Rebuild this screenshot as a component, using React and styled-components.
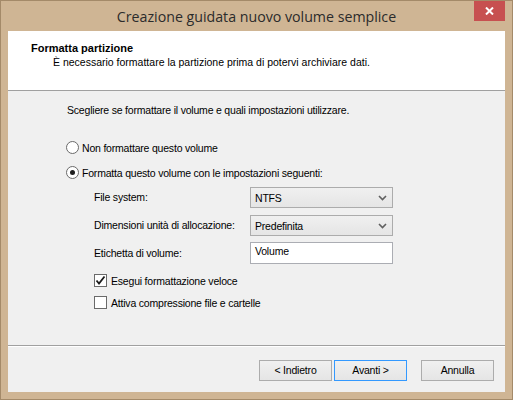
import React from "react";
import styled, { createGlobalStyle } from "styled-components";

const GlobalStyle = createGlobalStyle`
  html, body {
    margin: 0;
    padding: 0;
    background: #cfb594;
  }
  * {
    box-sizing: border-box;
  }
`;

export default function App() {
  return (
    <>
      <GlobalStyle />
      <WindowFrame>
        <TitleBar>
          <span />
          <TitleText>Creazione guidata nuovo volume semplice</TitleText>
          <CloseButton>
            <svg width="9" height="8" viewBox="0 0 9 8">
              <path d="M1 0.5 L8 7.5 M8 0.5 L1 7.5" stroke="#fff" strokeWidth="2" />
            </svg>
          </CloseButton>
        </TitleBar>

        <ClientArea>
          <WizardHeader>
            <HeaderTitle>Formatta partizione</HeaderTitle>
            <HeaderSubtitle>
              È necessario formattare la partizione prima di potervi archiviare dati.
            </HeaderSubtitle>
          </WizardHeader>

          <Body>
            <Intro>Scegliere se formattare il volume e quali impostazioni utilizzare.</Intro>

            <RadioRow $top={24}>
              <RadioCircle />
              <span>Non formattare questo volume</span>
            </RadioRow>
            <RadioRow $top={12}>
              <RadioCircle $checked />
              <span>Formatta questo volume con le impostazioni seguenti:</span>
            </RadioRow>

            <SettingsGrid>
              <FieldLabel>File system:</FieldLabel>
              <ComboBox>
                <span>NTFS</span>
                <Chevron />
              </ComboBox>

              <FieldLabel>Dimensioni unità di allocazione:</FieldLabel>
              <ComboBox>
                <span>Predefinita</span>
                <Chevron />
              </ComboBox>

              <FieldLabel>Etichetta di volume:</FieldLabel>
              <TextField>Volume</TextField>
            </SettingsGrid>

            <CheckRow $top={10}>
              <CheckBox>
                <svg width="11" height="11" viewBox="0 0 11 11">
                  <path d="M1.5 5.5 L4 8.5 L9.5 1.5" stroke="#1a1a1a" strokeWidth="1.8" fill="none" />
                </svg>
              </CheckBox>
              <span>Esegui formattazione veloce</span>
            </CheckRow>
            <CheckRow $top={9}>
              <CheckBox />
              <span>Attiva compressione file e cartelle</span>
            </CheckRow>
          </Body>

          <Footer>
            <PushButton>&lt; Indietro</PushButton>
            <PushButton $default>Avanti &gt;</PushButton>
            <PushButton $gap={12}>Annulla</PushButton>
          </Footer>
        </ClientArea>
      </WindowFrame>
    </>
  );
}

function Chevron() {
  return (
    <svg width="9" height="6" viewBox="0 0 9 6">
      <path d="M1 1 L4.5 4.5 L8 1" stroke="#606060" strokeWidth="1.6" fill="none" />
    </svg>
  );
}

const WindowFrame = styled.div`
  width: 513px;
  height: 400px;
  background: #cfb594;
  border: 1px solid #a48a69;
  padding: 0 7px 7px 7px;
  display: flex;
  flex-direction: column;
`;

const TitleBar = styled.div`
  height: 30px;
  display: grid;
  grid-template-columns: 1fr auto 1fr;
  align-items: center;
`;

const TitleText = styled.div`
  font-family: "Open Sans", "Noto Sans", sans-serif;
  font-size: 14.2px;
  color: #2b2b2b;
  white-space: nowrap;
`;

const CloseButton = styled.div`
  justify-self: end;
  align-self: start;
  width: 31px;
  height: 20px;
  background: #c75050;
  display: flex;
  align-items: center;
  justify-content: center;
`;

const ClientArea = styled.div`
  flex: 1;
  background: #f0f0f0;
  display: flex;
  flex-direction: column;
  font-family: "Liberation Sans", Arial, sans-serif;
  font-size: 10.5px;
  letter-spacing: -0.2px;
  color: #000;
`;

const WizardHeader = styled.div`
  height: 60px;
  background: #fff;
  border-bottom: 1px solid #a0a0a0;
  padding: 10px 0 0 23px;
`;

const HeaderTitle = styled.div`
  font-weight: bold;
  font-size: 11px;
  letter-spacing: 0;
  line-height: 14px;
`;

const HeaderSubtitle = styled.div`
  line-height: 14px;
  letter-spacing: 0;
  padding-left: 22px;
`;

const Body = styled.div`
  flex: 1;
  padding: 13px 0 0 58px;
  display: flex;
  flex-direction: column;
`;

const Intro = styled.div`
  line-height: 13px;
  padding-left: 1px;
`;

const RadioRow = styled.div`
  display: flex;
  align-items: center;
  gap: 3px;
  height: 13px;
  margin-top: ${(p) => p.$top}px;
`;

const RadioCircle = styled.span`
  width: 13px;
  height: 13px;
  border-radius: 50%;
  border: 1px solid #6a6a6a;
  background: #fff;
  display: flex;
  align-items: center;
  justify-content: center;
  flex-shrink: 0;

  &::after {
    content: "";
    display: ${(p) => (p.$checked ? "block" : "none")};
    width: 5px;
    height: 5px;
    border-radius: 50%;
    background: #1e1e1e;
  }
`;

const SettingsGrid = styled.div`
  display: grid;
  grid-template-columns: 156px 143px;
  row-gap: 7px;
  align-items: center;
  margin-top: 8px;
  padding-left: 28px;
  & > :nth-child(6) {
    margin-top: -1px;
  }
`;

const FieldLabel = styled.div`
  line-height: 13px;
`;

const ComboBox = styled.div`
  height: 21px;
  border: 1px solid #acacac;
  background: linear-gradient(#f0f0f0, #e5e5e5);
  display: flex;
  align-items: center;
  justify-content: space-between;
  padding: 0 5px 0 4px;
`;

const TextField = styled.div`
  height: 22px;
  border: 1px solid #abadb3;
  background: #fff;
  padding: 2px 0 0 4px;
`;

const CheckRow = styled.div`
  display: flex;
  align-items: center;
  gap: 4px;
  height: 13px;
  margin-top: ${(p) => p.$top}px;
  padding-left: 28px;
`;

const CheckBox = styled.span`
  width: 13px;
  height: 13px;
  border: 1px solid #6a6a6a;
  background: #fff;
  display: flex;
  align-items: center;
  justify-content: center;
  flex-shrink: 0;
`;

const Footer = styled.div`
  height: 47px;
  border-top: 1px solid #a0a0a0;
  box-shadow: inset 0 1px 0 #fff;
  display: flex;
  justify-content: flex-end;
  align-items: flex-start;
  padding: 14px 11px 0 0;
  gap: 2px;
`;

const PushButton = styled.div`
  width: 73px;
  height: 21px;
  margin-left: ${(p) => p.$gap || 0}px;
  border: 1px solid ${(p) => (p.$default ? "#3399ff" : "#acacac")};
  background: linear-gradient(#f0f0f0, #e5e5e5);
  display: flex;
  align-items: center;
  justify-content: center;
  line-height: 13px;
`;
